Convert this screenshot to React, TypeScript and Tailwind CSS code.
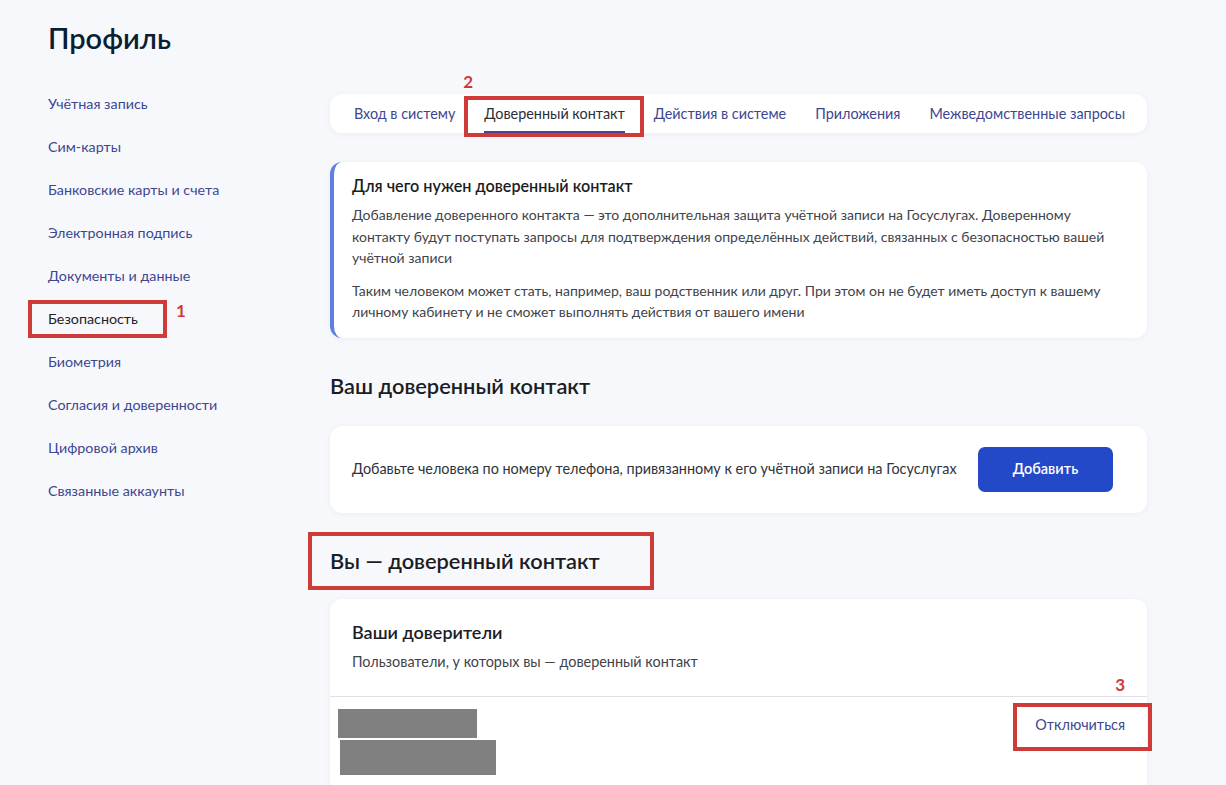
import React from "react";

const navItems = [
  "Учётная запись",
  "Сим-карты",
  "Банковские карты и счета",
  "Электронная подпись",
  "Документы и данные",
  "Безопасность",
  "Биометрия",
  "Согласия и доверенности",
  "Цифровой архив",
  "Связанные аккаунты",
];

const tabs = [
  "Вход в систему",
  "Доверенный контакт",
  "Действия в системе",
  "Приложения",
  "Межведомственные запросы",
];

export default function App() {
  return (
    <div
      className="min-h-[785px] bg-[#f7f8fc] flex pl-[48px] text-[#2b2f36]"
      style={{ fontFamily: "Lato, 'Noto Sans', 'Liberation Sans', sans-serif" }}
    >
      <aside className="w-[282px] shrink-0">
        <h1 className="pt-[20px] text-[29px] leading-[36px] font-semibold text-[#0b1f33]">
          Профиль
        </h1>
        <nav className="mt-[26px]">
          {navItems.map((item) => {
            const active = item === "Безопасность";
            return (
              <div key={item} className="relative h-[43px] flex items-center">
                <span
                  className={
                    "text-[14.3px] leading-[20px] " +
                    (active ? "text-[#1f2329]" : "text-[#3d4790]")
                  }
                >
                  {item}
                </span>
                {active && (
                  <>
                    <div className="absolute left-[-20px] top-[3px] w-[139px] h-[38px] border-[4px] border-[#cf3b38]" />
                    <div className="absolute left-[128px] top-[1px] text-[17px] font-bold text-[#cf3b38]">
                      1
                    </div>
                  </>
                )}
              </div>
            );
          })}
        </nav>
      </aside>

      <main className="w-[817px] shrink-0 pt-[94px] pb-[40px]">
        {/* Tabs */}
        <div className="bg-white rounded-[12px] h-[39px] flex items-center gap-[29px] pl-[24px] shadow-[0_1px_6px_rgba(20,40,90,0.05)]">
          {tabs.map((t) => {
            const active = t === "Доверенный контакт";
            return (
              <div key={t} className="relative h-full flex items-center">
                <span
                  className={
                    "text-[14.4px] leading-[20px] whitespace-nowrap " +
                    (active ? "text-[#2b2f36]" : "text-[#3d4790]")
                  }
                >
                  {t}
                </span>
                {active && (
                  <>
                    <div className="absolute left-0 right-0 bottom-[0px] h-[2px] bg-[#4f3f95]" />
                    <div className="absolute left-[-20px] right-[-19px] top-[2px] h-[41px] border-[4px] border-[#cf3b38]" />
                    <div className="absolute left-[-21px] top-[-25px] text-[17px] font-bold text-[#cf3b38]">
                      2
                    </div>
                  </>
                )}
              </div>
            );
          })}
        </div>

        {/* Info card */}
        <div className="mt-[29px] bg-white rounded-[12px] border-l-[4px] border-[#5b7fe3] pl-[18px] pr-[18px] pt-[12px] pb-[15px] shadow-[0_1px_6px_rgba(20,40,90,0.05)]">
          <div className="text-[16.2px] leading-[24px] font-semibold text-[#1a1d23]">
            Для чего нужен доверенный контакт
          </div>
          <p className="mt-[6px] text-[14px] leading-[21.5px] text-[#3f434a]">
            Добавление доверенного контакта — это дополнительная защита учётной записи на
            Госуслугах. Доверенному контакту будут поступать запросы для подтверждения
            определённых действий, связанных с безопасностью вашей учётной записи
          </p>
          <p className="mt-[11px] text-[14px] leading-[21.5px] text-[#3f434a]">
            Таким человеком может стать, например, ваш родственник или друг. При этом он не
            будет иметь доступ к вашему личному кабинету и не сможет выполнять действия от
            вашего имени
          </p>
        </div>

        {/* Heading 1 */}
        <h2 className="mt-[34px] text-[21.8px] leading-[28px] font-semibold text-[#1a1d23]">
          Ваш доверенный контакт
        </h2>

        <div className="mt-[26px] bg-white rounded-[12px] h-[87px] flex items-center justify-between pl-[22px] pr-[34px] shadow-[0_1px_6px_rgba(20,40,90,0.05)]">
          <span className="text-[14.4px] leading-[20px] text-[#2f333a]">
            Добавьте человека по номеру телефона, привязанному к его учётной записи на Госуслугах
          </span>
          <button className="w-[135px] h-[45px] rounded-[7px] bg-[#2449c8] text-white text-[14.5px] font-semibold">
            Добавить
          </button>
        </div>

        {/* Heading 2 */}
        <div className="relative mt-[34px]">
          <h2 className="text-[21.8px] leading-[28px] font-semibold text-[#1a1d23]">
            Вы — доверенный контакт
          </h2>
          <div className="absolute left-[-22px] top-[-15px] w-[346px] h-[58px] border-[4px] border-[#cf3b38]" />
        </div>

        <div className="mt-[24px] bg-white rounded-[12px] shadow-[0_1px_6px_rgba(20,40,90,0.05)]">
          <div className="pl-[22px] pt-[21px] pb-[24px]">
            <div className="text-[18px] leading-[24px] font-semibold text-[#1a1d23]">
              Ваши доверители
            </div>
            <div className="mt-[8px] text-[14.4px] leading-[20px] text-[#3f434a]">
              Пользователи, у которых вы — доверенный контакт
            </div>
          </div>
          <div className="h-[1px] bg-[#dfe1e6]" />
          <div className="flex justify-between pl-[8px] pr-[22px] pt-[12px] pb-[30px]">
            <div className="flex flex-col gap-[2px]">
              <div className="w-[139px] h-[29px] bg-[#808080]" />
              <div className="ml-[2px] w-[156px] h-[35px] bg-[#808080]" />
            </div>
            <div className="relative h-[32px] flex items-center">
              <span className="text-[14.4px] leading-[20px] text-[#3d4790]">Отключиться</span>
              <div className="absolute left-[-22px] right-[-27px] top-[-6px] h-[48px] border-[4px] border-[#cf3b38]" />
              <div className="absolute right-[0px] top-[-37px] text-[17px] font-bold text-[#cf3b38]">
                3
              </div>
            </div>
          </div>
        </div>
      </main>
    </div>
  );
}
